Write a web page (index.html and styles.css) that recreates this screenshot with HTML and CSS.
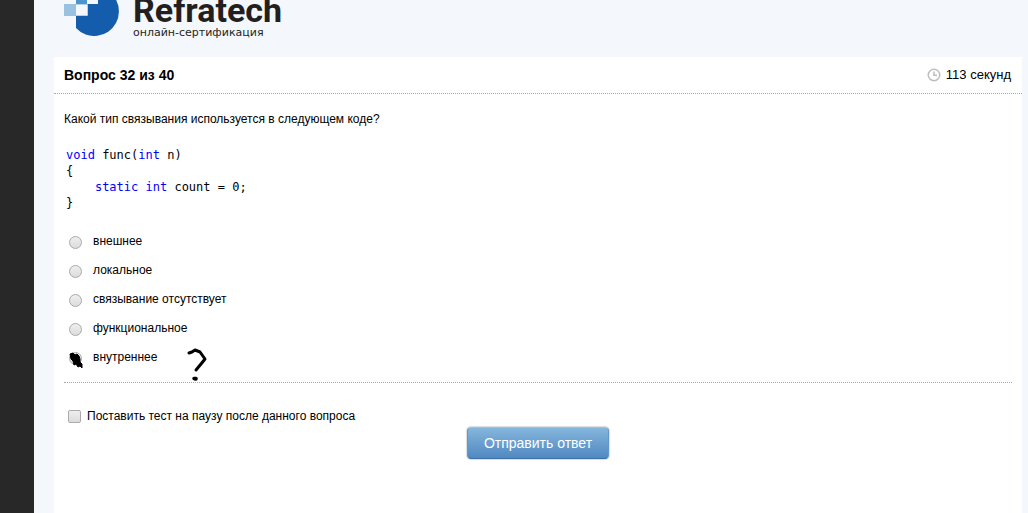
FILE: index.html
```html
<!DOCTYPE html>
<html lang="ru">
<head>
<meta charset="utf-8">
<title>Refratech – онлайн-сертификация</title>
<link rel="stylesheet" href="styles.css">
</head>
<body>
<div class="page">
  <header class="header">
    <svg class="logo-mark" width="56" height="56" viewBox="0 0 56 56" aria-hidden="true">
      <path fill="#145dac" d="M12 24V48A24.700 24.700 0 1 0 34 6.900V24Z"/>
      <path fill="#4b94cd" d="M12 12H23V24H12Z"/>
      <path fill="#f4f7fc" d="M23 8H34V24H23ZM12 24H23V36H12Z"/>
      <path fill="#9bc1e1" d="M0 24H12V36H0Z"/>
      <path fill="none" stroke="#b5d0e9" d="M12 24.500H23.500V35.500H12"/>
    </svg>
    <div class="logo-text">
      <div class="logo-name">Refratech</div>
      <div class="logo-tagline">онлайн-сертификация</div>
    </div>
  </header>
  <main class="panel">
    <div class="panel-head">
      <h1 class="title">Вопрос 32 из 40</h1>
      <div class="timer">
        <svg width="14" height="14" viewBox="0 0 14 14" fill="none" stroke="#bdbdbd" stroke-width="1.500" aria-hidden="true"><circle cx="7" cy="7" r="5.750"/><path d="M7 3.500V7.250H10"/></svg>
        <span>113 секунд</span>
      </div>
    </div>
    <form class="form">
      <p class="question">Какой тип связывания используется в следующем коде?</p>
<pre class="code"><span class="kw">void</span> func(<span class="kw">int</span> n)
{
    <span class="kw">static</span> <span class="kw">int</span> count = 0;
}</pre>
      <div class="answers">
        <label class="answer"><input class="radio" type="radio" name="answer"><span>внешнее</span></label>
        <label class="answer"><input class="radio" type="radio" name="answer"><span>локальное</span></label>
        <label class="answer"><input class="radio" type="radio" name="answer"><span>связывание отсутствует</span></label>
        <label class="answer"><input class="radio" type="radio" name="answer"><span>функциональное</span></label>
        <label class="answer"><input class="radio" type="radio" name="answer"><span>внутреннее</span>
          <svg class="scribble" width="150" height="40" viewBox="0 0 150 40" aria-hidden="true">
            <path d="M6 7L9 6L11 8L13 7L15 9L16 12V15L18 17V21L16 19L14 20L12 17L10 18L9 14L7 12Z" stroke="#000" stroke-width="1" stroke-linejoin="round"/>
            <g fill="none" stroke="#000" stroke-width="3" stroke-linecap="round" stroke-linejoin="round"><path d="M125 6L128 5L131 3L136 5L141 12L137 17L132 23"/><path d="M130 31.500H132V32H131" stroke-width="3.500"/></g>
          </svg>
        </label>
      </div>
      <label class="pause"><input class="check" type="checkbox"><span>Поставить тест на паузу после данного вопроса</span></label>
      <button class="submit" type="button">Отправить ответ</button>
    </form>
  </main>
</div>
</body>
</html>
```

FILE: styles.css
```css
* { box-sizing: border-box; }

body {
  margin: 0;
  background: #f4f7fc;
  color: #000;
  font: 12px/16px "Liberation Sans", Arial, sans-serif;
}

.page {
  display: flex;
  flex-direction: column;
  min-height: 100vh;
  border-left: 34px solid #282828;
  padding: 0 6px 0 20px;
}

.header {
  display: flex;
  align-items: flex-end;
  gap: 13px;
  height: 57px;
  padding: 0 10px 18px;
  overflow: hidden;
}

.logo-mark { flex: none; margin-bottom: 3px; }

.logo-text { color: #231f20; }

.logo-name {
  font: bold 34px/34px Roboto, sans-serif;
}

.logo-tagline {
  font: 11px/12px "DejaVu Sans", sans-serif;
}

.panel {
  flex: 1;
  background: #fff;
}

.panel-head {
  display: flex;
  align-items: center;
  justify-content: space-between;
  padding: 10px 11px 10px 10px;
  border-bottom: 1px dotted #aaa;
}

.title {
  margin: 0;
  font-size: 14px;
  line-height: 16px;
}

.timer {
  display: flex;
  align-items: center;
  gap: 5px;
  font-size: 13px;
}

.form {
  display: flex;
  flex-direction: column;
  padding: 17px 10px;
}

.question { margin: 0; }

.code {
  margin: 20px 2px 0;
  font: 12px/16px "DejaVu Sans Mono", monospace;
}

.kw { color: #00f; }

.answers {
  display: flex;
  flex-direction: column;
  align-items: flex-start;
  gap: 13px;
  margin-top: 22px;
  padding: 0 5px 17px;
  border-bottom: 1px dotted #aaa;
}

.answer {
  position: relative;
  display: flex;
  align-items: center;
  gap: 11px;
}

.radio,
.check {
  appearance: none;
  width: 13px;
  height: 13px;
  border: 1px solid #aaa;
  background: linear-gradient(#eee, #dcdcdc);
}

.radio {
  margin: 2px 0 0;
  border-radius: 50%;
}

.check {
  margin: 0;
  border-radius: 2px;
}

.radio:checked { background: radial-gradient(#444 35%, #e4e4e4 40%); }
.check:checked { background: #777; }

.scribble {
  position: absolute;
  top: -2px;
  left: -5px;
  pointer-events: none;
}

.pause {
  display: flex;
  align-items: center;
  align-self: flex-start;
  gap: 6px;
  margin: 25px 4px 0;
}

.submit {
  align-self: center;
  margin-top: 3px;
  padding: 7px 16px;
  border: 1px solid #6498c8;
  border-top-color: #a5bfd6;
  border-bottom-color: #3f6fa5;
  border-radius: 4px;
  background: linear-gradient(#85b6dc, #5088c1);
  box-shadow: 0 0 1px 1px #d9dce2;
  color: #fff;
  font: 14px/16px "Liberation Sans", Arial, sans-serif;
}
```
